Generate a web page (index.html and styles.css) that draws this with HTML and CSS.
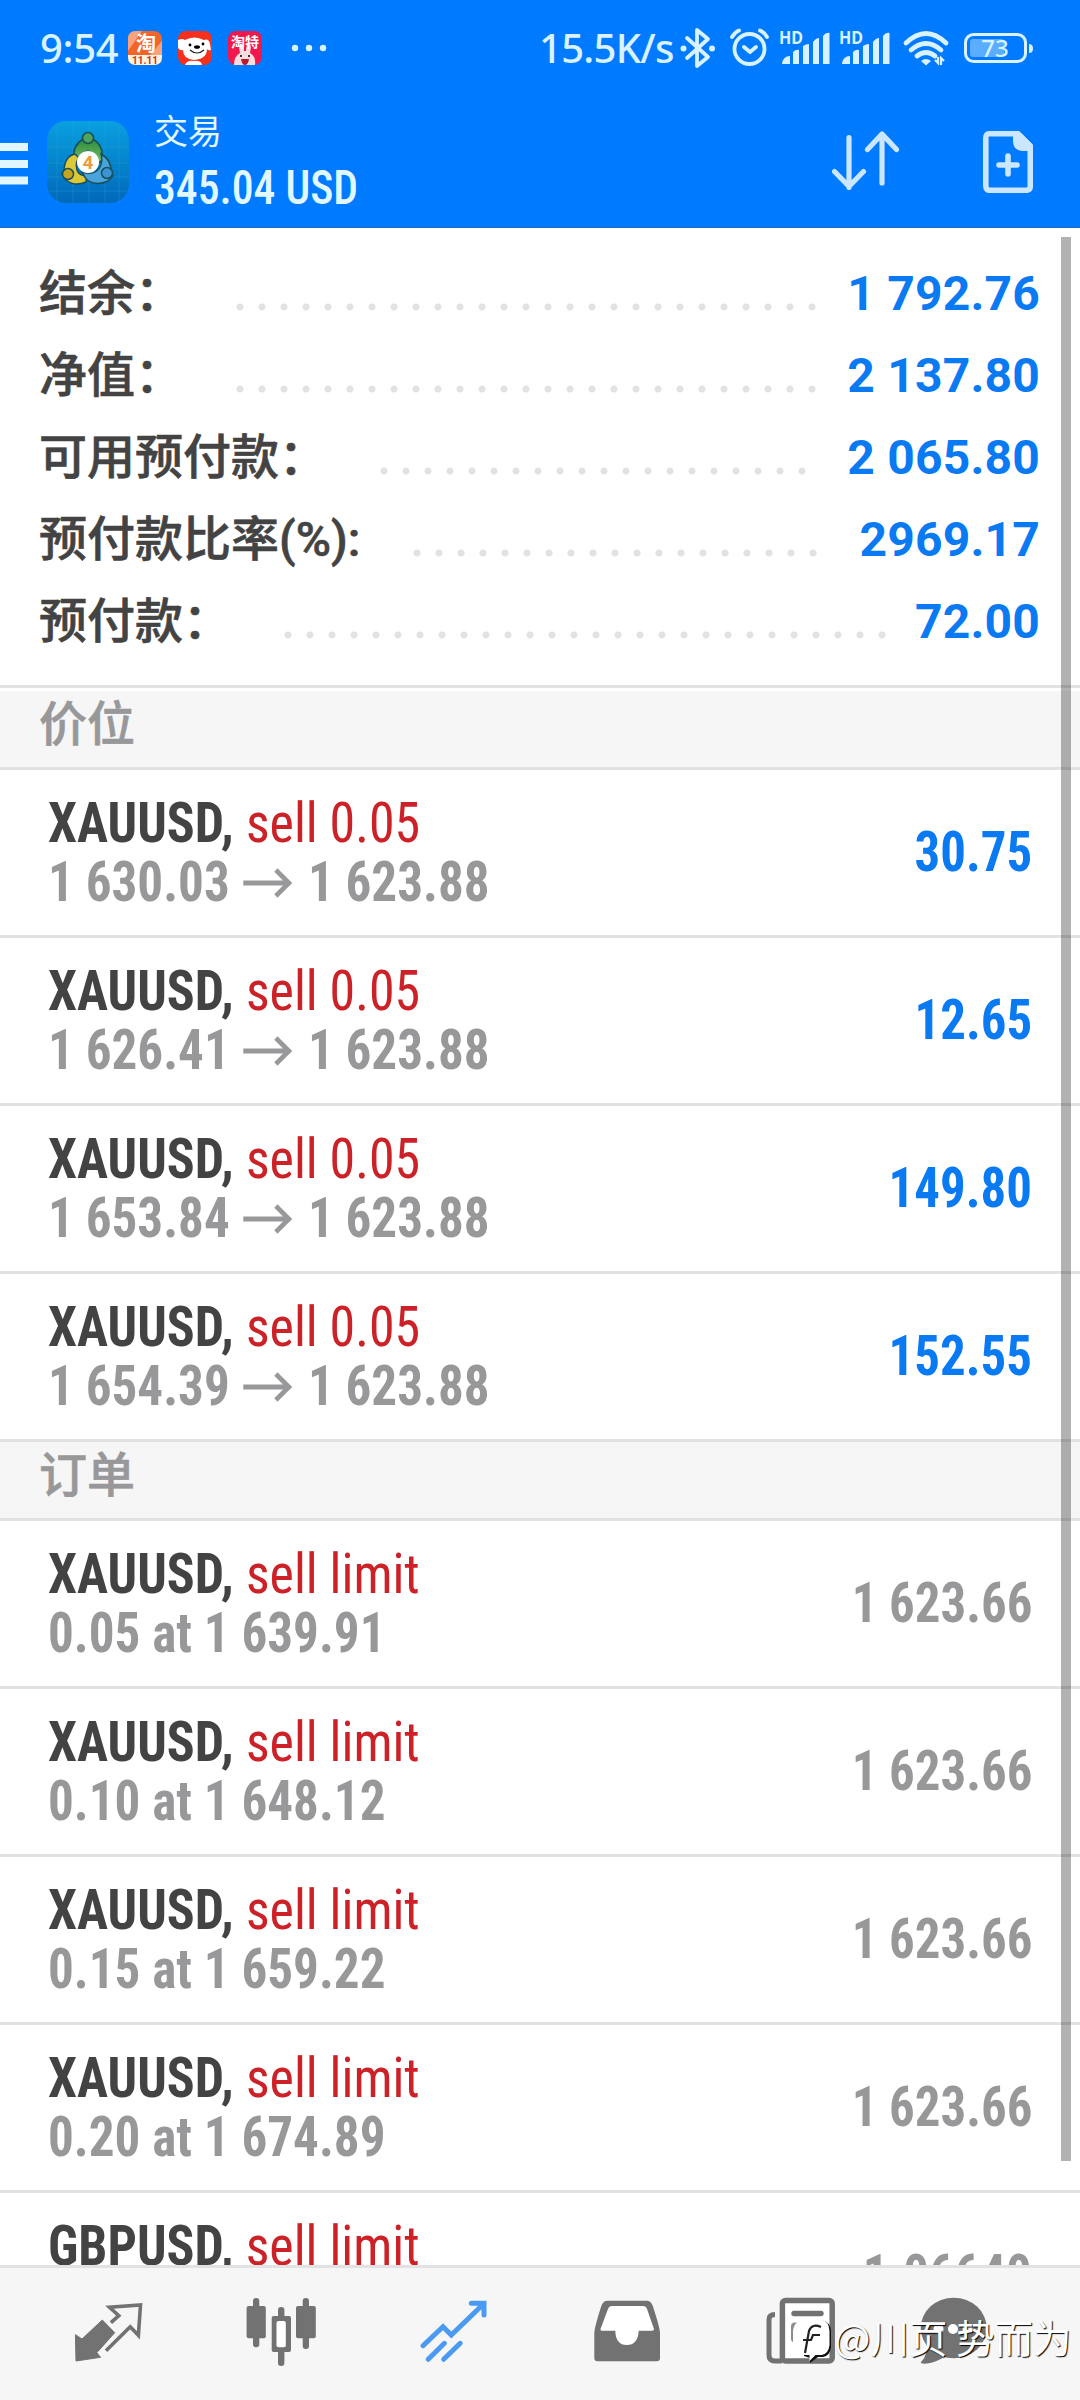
FILE: index.html
```html
<!DOCTYPE html>
<html lang="zh-CN">
<head>
<meta charset="utf-8">
<title>交易</title>
<link rel="stylesheet" href="styles.css">
</head>
<body>
<div class="phone">
  <header class="header">
    <div class="status">
      <span class="clock">9:54</span>
      <div class="notes">
        <svg class="note" viewBox="0 0 34 34">
          <rect width="34" height="34" rx="8" fill="#f0662a"/>
          <path d="M0 8Q0 0 8 0h6L0 20zM34 10L22 24h12z" fill="#f9a37c"/>
          <path d="M0 24h34v2q0 8-8 8H8q-8 0-8-8z" fill="#fff0dc"/>
          <text x="18" y="20" class="note-zh note-big">淘</text>
          <text x="17" y="32.500" class="note-num">11.11</text>
        </svg>
        <svg class="note" viewBox="0 0 34 34">
          <rect width="34" height="34" rx="8" fill="#f6301c"/>
          <path d="M0 9q4-2 7 0Q16 4 26 9q5-2 6 4l1 6q-3 1-4-1 0 10-13 11Q5 28 5 19q-4 1-5-3z" fill="#fff"/>
          <path d="M7 34q2-5 9-4 7-1 8 4z" fill="#fff"/>
          <circle cx="12" cy="14" r="1.400"/><circle cx="25" cy="13" r="1.400"/><ellipse cx="19" cy="16" rx="3" ry="1.800"/>
          <path d="M12 19q7 6 14 0" fill="none" stroke="#222" stroke-width="1.200"/>
        </svg>
        <svg class="note" viewBox="0 0 34 34">
          <rect width="34" height="34" rx="8" fill="#f0184c"/>
          <path d="M6 34q0-9 6-12-2-9 1-9 3 0 3 7h2q0-7 3-7t1 9q6 3 5 12z" fill="#fbdde0"/>
          <text x="17" y="16" class="note-zh note-small">淘特</text>
          <circle cx="13" cy="25" r="1"/><circle cx="21" cy="25" r="1"/>
          <path d="M13 28h8q-1 6-4 6t-4-6z" fill="#b81a2c"/>
        </svg>
      </div>
      <svg class="more" viewBox="0 0 36 8"><g fill="#d8f2ff"><circle cx="4" cy="4" r="3.200"/><circle cx="18" cy="4" r="3.200"/><circle cx="32" cy="4" r="3.200"/></g></svg>
      <div class="tray">
        <span class="speed">15.5K/s</span>
        <svg class="bt" viewBox="0 0 36 40"><path d="M7 10l21 19-11 9V2l11 9L7 30" fill="none" stroke="#d8f2ff" stroke-width="3.800" stroke-linejoin="round" stroke-linecap="round"/><circle cx="3.500" cy="20.500" r="3" fill="#d8f2ff"/><circle cx="32" cy="20.500" r="3" fill="#d8f2ff"/></svg>
        <svg class="alarm" viewBox="0 0 39 40"><g fill="none" stroke="#d8f2ff" stroke-width="3.800" stroke-linecap="round" stroke-linejoin="round"><circle cx="19.500" cy="21" r="15"/><path d="M14 19l6 5 6-5M2 9q3-5 7-6.500M37 9q-3-5-7-6.500"/></g></svg>
        <svg class="hd" viewBox="0 0 50 40"><text x="-1" y="16" class="hd-text" textLength="24" lengthAdjust="spacingAndGlyphs">HD</text><path d="M2 36q1-8 8-8v8zM13 36V24q3-3 6-2v14zM23 36V18q3-2 6-2v20zM33 36V14q3-4 6-4v26zM43 36V8q3-4 6.500-3v31z" fill="#d8f2ff"/></svg>
        <svg class="hd hd-next" viewBox="0 0 50 40"><text x="-1" y="16" class="hd-text" textLength="24" lengthAdjust="spacingAndGlyphs">HD</text><path d="M2 36q1-8 8-8v8zM13 36V24q3-3 6-2v14zM23 36V18q3-2 6-2v20zM33 36V14q3-4 6-4v26zM43 36V8q3-4 6.500-3v31z" fill="#d8f2ff"/></svg>
        <svg class="wifi" viewBox="0 0 46 40"><g fill="none" stroke="#d8f2ff" stroke-width="4.800" stroke-linecap="round"><path d="M3 15Q23-4 43 15M8 22q15-13 30 0M14 28q9-7 18 0"/></g><path d="M18 33q5-4 10 0l-5 4.500z" fill="#d8f2ff"/><path d="M32 32l3 3v-6M41 33l-3-3v7" fill="none" stroke="#d8f2ff" stroke-width="2.200"/></svg>
        <svg class="battery" viewBox="0 0 69 40"><rect x="6" y="11" width="34" height="18" rx="3" fill="#5aadff"/><rect x="1.500" y="6.500" width="60" height="27" rx="8" fill="none" stroke="#d8f2ff" stroke-width="3"/><path d="M65 16q4 0 4 4.500t-4 4.500z" fill="#d8f2ff"/><text x="31" y="29" class="bat-text">73</text></svg>
      </div>
    </div>
    <div class="toolbar">
      <svg class="menu" viewBox="0 0 28 42"><path d="M0 0h28v8H0zM0 17h28v8H0zM0 33.500h28v8H0z" fill="#e2f6ff"/></svg>
      <svg class="logo" viewBox="0 0 82 82">
        <defs>
          <linearGradient id="bg" x2="0" y2="1"><stop stop-color="#0aa0e0"/><stop offset="1" stop-color="#0068b8"/></linearGradient>
          <linearGradient id="green" x2="0" y2="1"><stop stop-color="#2c8a3c"/><stop offset="1" stop-color="#7cc46a"/></linearGradient>
        </defs>
        <rect width="82" height="82" rx="19" fill="url(#bg)"/>
        <path d="M10 0v82M26 0v82M42 0v82M58 0v82M72 0v82M0 26h82M0 42h82M0 56h82M0 70h82" stroke="#2fa6e2" stroke-width=".6" opacity=".5"/>
        <g stroke="#174f5c" stroke-width="1.500">
          <path d="M27 38q-2-13 9-20h10q11 7 9 21l-6 5q1-12-8-14-8 1-8 8z" fill="url(#green)"/>
          <path d="M28 33q-10 2-11 16l-2 4 4 6q9 7 20 2l1-6q-8 0-10-6-2-8 2-12z" fill="#dcc838"/>
          <path d="M54 33q11 6 10 19l2 3-5 5q-12 6-22-2l-4-7q13 4 18-5 3-6 1-13z" fill="#4ba3dc"/>
          <circle cx="41" cy="17" r="5.500" fill="#4fa35c"/>
          <circle cx="21" cy="53" r="5.500" fill="#c9a41e"/>
          <circle cx="60" cy="52" r="5.500" fill="#3b93d4"/>
        </g>
        <circle cx="41" cy="41" r="11" fill="#fff"/>
        <text x="41" y="48" class="logo-four">4</text>
      </svg>
      <div class="title">
        <div class="title-name">交易</div>
        <div class="title-sum"><span class="narrow">345.04 USD</span></div>
      </div>
      <svg class="sort" viewBox="0 0 68 60"><path d="M17 7.500v50M2.500 41.500L17 56.500l14.500-15M50 53V5M35.500 19.500L50 4l14.500 15.500" fill="none" stroke="#cbe6ff" stroke-width="5.200" stroke-linecap="round" stroke-linejoin="round"/></svg>
      <svg class="newdoc" viewBox="0 0 50 62"><path d="M6 2.800h29L47.300 15v40q0 4.300-4.300 4.300H7q-4.200 0-4.200-4.300V7Q2.800 2.800 6 2.800z" fill="none" stroke="#cbe6ff" stroke-width="5.600"/><path d="M30 2h8l11 11v7H39q-9-1-9-10z" fill="#cbe6ff"/><path d="M25 25v18M16 34h18" stroke="#cbe6ff" stroke-width="5.600" stroke-linecap="round"/></svg>
    </div>
  </header>

  <main class="content">
    <section class="summary">
      <div class="sum-row"><span class="sum-label">结余：</span><i class="dots" style="--n:27"></i><b class="sum-value">1 792.76</b></div>
      <div class="sum-row"><span class="sum-label">净值：</span><i class="dots" style="--n:27"></i><b class="sum-value">2 137.80</b></div>
      <div class="sum-row"><span class="sum-label">可用预付款：</span><i class="dots" style="--n:20"></i><b class="sum-value">2 065.80</b></div>
      <div class="sum-row"><span class="sum-label">预付款比率<span class="latin">(%):</span></span><i class="dots" style="--n:19"></i><b class="sum-value">2969.17</b></div>
      <div class="sum-row"><span class="sum-label">预付款：</span><i class="dots" style="--n:28"></i><b class="sum-value">72.00</b></div>
    </section>

    <h2 class="section first">价位</h2>
    <div class="row"><div class="deal"><div class="line"><b class="sym">XAUUSD,</b><span class="side">sell 0.05</span></div><div class="line prices"><span>1 630.03</span><svg class="arrow" viewBox="0 0 54 30"><path d="M0 15h50M35 2l14 13-14 13" /></svg><span>1 623.88</span></div></div><b class="profit">30.75</b></div>
    <div class="row"><div class="deal"><div class="line"><b class="sym">XAUUSD,</b><span class="side">sell 0.05</span></div><div class="line prices"><span>1 626.41</span><svg class="arrow" viewBox="0 0 54 30"><path d="M0 15h50M35 2l14 13-14 13" /></svg><span>1 623.88</span></div></div><b class="profit">12.65</b></div>
    <div class="row"><div class="deal"><div class="line"><b class="sym">XAUUSD,</b><span class="side">sell 0.05</span></div><div class="line prices"><span>1 653.84</span><svg class="arrow" viewBox="0 0 54 30"><path d="M0 15h50M35 2l14 13-14 13" /></svg><span>1 623.88</span></div></div><b class="profit">149.80</b></div>
    <div class="row"><div class="deal"><div class="line"><b class="sym">XAUUSD,</b><span class="side">sell 0.05</span></div><div class="line prices"><span>1 654.39</span><svg class="arrow" viewBox="0 0 54 30"><path d="M0 15h50M35 2l14 13-14 13" /></svg><span>1 623.88</span></div></div><b class="profit">152.55</b></div>

    <h2 class="section">订单</h2>
    <div class="row"><div class="deal"><div class="line"><b class="sym">XAUUSD,</b><span class="side">sell limit</span></div><div class="line order">0.05 at 1 639.91</div></div><b class="profit quote">1 623.66</b></div>
    <div class="row"><div class="deal"><div class="line"><b class="sym">XAUUSD,</b><span class="side">sell limit</span></div><div class="line order">0.10 at 1 648.12</div></div><b class="profit quote">1 623.66</b></div>
    <div class="row"><div class="deal"><div class="line"><b class="sym">XAUUSD,</b><span class="side">sell limit</span></div><div class="line order">0.15 at 1 659.22</div></div><b class="profit quote">1 623.66</b></div>
    <div class="row"><div class="deal"><div class="line"><b class="sym">XAUUSD,</b><span class="side">sell limit</span></div><div class="line order">0.20 at 1 674.89</div></div><b class="profit quote">1 623.66</b></div>
    <div class="row"><div class="deal"><div class="line"><b class="sym">GBPUSD,</b><span class="side">sell limit</span></div></div><b class="profit quote">1.06640</b></div>
    <div class="scrollbar"></div>
  </main>

  <nav class="nav">
    <div class="tab"><svg viewBox="0 0 80 80"><path d="M7.400 42.700L14 47l20.300-19 12.400 12.700-17.900 20 3.800 4.600L8 69z" fill="#727272" stroke="#727272" stroke-linejoin="round"/><path d="M42.900 30.700l7.900-7-9.300-8.400 31-2.300-2.100 30.300-8.200-8.600L38 58.700" fill="none" stroke="#727272" stroke-width="3.600"/></svg></div>
    <div class="tab"><svg viewBox="0 0 80 80"><g fill="#727272"><rect x="5.600" y="14" width="19.200" height="32.300" rx="2"/><rect x="12" y="6" width="6.300" height="49.300" rx="3"/><rect x="37" y="15" width="6.400" height="59" rx="3"/><rect x="30.700" y="24" width="19.300" height="36" rx="2"/><rect x="55" y="14" width="19.800" height="32.300" rx="2"/><rect x="61.700" y="6" width="6.300" height="51" rx="3"/></g><rect x="35.500" y="29" width="9.300" height="26.300" rx="2" fill="#fff"/></svg></div>
    <div class="tab"><svg viewBox="0 0 80 80"><path d="M9 53.700l20-19 8.300 8.300L70 11.500M57.300 11.300H70V23M14.200 67.300l16.200-16M29.700 67.300l16.500-16" fill="none" stroke="#4a9af2" stroke-width="5" stroke-linecap="round"/></svg></div>
    <div class="tab"><svg viewBox="0 0 80 80"><path d="M7.300 66V41q0-5 7-27 2-5.300 6-5.300h39.500q4 0 6 5.300 7.200 22 7.200 27v25q0 3.300-3.300 3.300H10.600q-3.300 0-3.300-3.300z" fill="#727272"/><path d="M25 14h31q3 0 4 3l7 20q0 1.700-2 1.700H51.700Q51 53 39.800 53T28.300 38.700H15q-2 0-1.500-1.700l7.500-20q1-3 4-3z" fill="#fff"/></svg></div>
    <div class="tab"><svg viewBox="0 0 80 80"><rect x="22.400" y="8.500" width="49.800" height="60.400" rx="3" fill="#fff" stroke="#727272" stroke-width="5.500"/><path d="M15 22.500q-6 0-6 5V63q0 6 6 6h7" fill="none" stroke="#727272" stroke-width="5"/><path d="M34 21.500h27" stroke="#727272" stroke-width="5.400" stroke-linecap="round"/><rect x="31" y="30.500" width="32" height="20" rx="4" fill="#8d8d8d"/></svg></div>
    <div class="tab tab-last"><svg viewBox="0 0 80 80"><ellipse cx="40.700" cy="36" rx="33" ry="30.300" fill="#727272"/><path d="M13 50q3 12-5.300 20.500Q8 72 14 71.500q9-1 18-7z" fill="#727272"/><g fill="#fff"><circle cx="25.500" cy="37" r="5"/><circle cx="40" cy="37" r="5"/><circle cx="54.500" cy="37" r="5"/></g></svg></div>
    <div class="mark">
      <svg class="mark-logo" viewBox="0 0 40 46"><path d="M15 3h13q11 1 11 12v15q-1 9-8 10h-5l-8 6v-5l-6-2z" fill="#111"/><path d="M14 2h13q10 1 10.500 12v14q-1 9-8 10h-6l-6 6v-6h-4Q2 37 1 27V14Q2 3 14 2z" fill="#fff"/><path d="M29 10q-9-4-12 4l-4 22M11 23h8l2-5h7" fill="none" stroke="#222" stroke-width="2.200"/></svg>
      <span>@川页 势而为</span>
    </div>
  </nav>
</div>
</body>
</html>
```
FILE: styles.css
```css
* { box-sizing: border-box; }
body { margin: 0; background: #fff; }
svg { display: block; flex: none; }

.phone {
  width: 1080px;
  height: 2400px;
  display: flex;
  flex-direction: column;
  overflow: hidden;
  font-family: Roboto, "Noto Sans CJK SC", sans-serif;
  color: #434343;
}

/* header */
.header {
  flex: none;
  height: 228px;
  background: #007aff;
  border-bottom: 2px solid #1a6fd6;
}
.status {
  height: 96px;
  display: flex;
  align-items: center;
  padding: 0 47px 0 40px;
  color: #d8f2ff;
  font: 500 40px/40px "Noto Sans", sans-serif;
}
.clock { width: 88px; letter-spacing: -.3px; }
.notes { display: flex; gap: 16px; }
.note { width: 34px; height: 34px; }
.note-zh { font-family: "Noto Sans CJK SC", sans-serif; font-weight: 700; fill: #fff; text-anchor: middle; }
.note-big { font-size: 20px; }
.note-small { font-size: 14px; }
.note-num { font: 700 10px Roboto, sans-serif; fill: #c8321e; text-anchor: middle; }
.more { width: 36px; height: 8px; margin-left: 29px; }
.tray { display: flex; align-items: center; margin-left: auto; }
.speed { width: 141px; letter-spacing: -.7px; }
.tray svg { height: 40px; overflow: visible; }
.bt { width: 36px; }
.alarm { width: 39px; margin-left: 14px; }
.hd { width: 50px; margin-left: 11px; }
.hd-next { margin-left: 10px; }
.wifi { width: 46px; margin-left: 13px; }
.battery { width: 69px; margin-left: 15px; }
.hd-text { font: 700 17px "Noto Sans", sans-serif; fill: #d8f2ff; }
.bat-text { font: 500 24px "Noto Sans", sans-serif; fill: #d8f2ff; text-anchor: middle; }

.toolbar { display: flex; align-items: flex-start; padding-right: 47px; }
.menu { width: 28px; height: 42px; margin-top: 47px; }
.logo { width: 82px; height: 82px; margin: 25px 25px 0 19px; }
.logo-four { font: 700 19px Roboto, sans-serif; fill: #f09a3e; text-anchor: middle; }
.title { flex: 1; color: #e2f8ff; }
.title-name { font: 400 34px/50px "Noto Sans CJK SC", sans-serif; margin-top: 9px; }
.title-sum { font: 500 48px/60px Roboto, sans-serif; font-stretch: 75%; margin-top: 3px; }
.narrow { display: inline-block; transform: scaleX(.91); transform-origin: left; }
.sort { width: 68px; height: 60px; margin: 34px 83px 0 0; }
.newdoc { width: 50px; height: 62px; margin-top: 35px; }

/* account summary */
.content { position: relative; flex: 1; min-height: 0; overflow: hidden; }
.summary { height: 457px; padding: 20px 40px 0 39px; }
.sum-row { display: flex; height: 82px; align-items: center; }
.sum-label { font: 500 48px/82px "Noto Sans CJK SC", sans-serif; -webkit-text-stroke: .6px #434343; white-space: nowrap; }
.latin { font-family: Roboto, sans-serif; line-height: 0; }
.dots {
  height: 8px;
  width: calc(var(--n) * 22px);
  margin: 36px 0 0 46px;
  background: radial-gradient(circle, #e2e2e2 3px, transparent 4px) 0 0 / 22px 8px;
}
.sum-value { margin: 9px 0 0 auto; font-size: 48px; font-weight: 700; letter-spacing: .2px; color: #0a7af2; }

/* section titles */
.section {
  margin: 0;
  height: 79px;
  padding-left: 39px;
  background: #f6f6f6;
  border-bottom: 3px solid #e2e2e2;
  color: #98989a;
  font: 500 48px/59px "Noto Sans CJK SC", sans-serif;
  -webkit-text-stroke: .6px #98989a;
}
.section.first { height: 85px; border-top: 3px solid #e2e2e2; box-shadow: inset 0 3px #fff; padding-top: 3px; }

/* positions and orders */
.row {
  height: 168px;
  display: flex;
  justify-content: space-between;
  align-items: center;
  padding: 0 48px;
  border-bottom: 3px solid #e2e2e2;
  font-size: 55px;
  line-height: 59px;
  font-stretch: 75%;
}
.deal { align-self: flex-start; padding-top: 24px; }
.line { display: flex; align-items: center; height: 59px; white-space: nowrap; transform: scaleX(.943); transform-origin: left; }
.sym { margin-right: 13px; }
.side { color: #cc2127; font-weight: 450; }
.prices, .order { font-weight: 700; color: #98989a; transform: scaleX(.93); }
.arrow { width: 56px; height: 30px; margin: 0 14px; }
.arrow path { fill: none; stroke: #98989a; stroke-width: 5; }
.profit { color: #0a7af2; transform: scaleX(.925); transform-origin: right; }
.quote { color: #98989a; }

.scrollbar {
  position: absolute;
  top: 9px;
  right: 9px;
  width: 10px;
  height: 1924px;
  background: rgba(0, 0, 0, .3);
}

/* bottom tabs */
.nav {
  position: relative;
  flex: none;
  height: 135px;
  display: flex;
  padding-left: 21.5px;
  background: #f6f6f6;
  border-top: 3px solid #e2e2e2;
}
.tab { width: 173px; display: flex; justify-content: center; padding-top: 24px; }
.tab-last { width: 133px; }
.tab svg { width: 80px; height: 80px; }
.mark {
  position: absolute;
  left: 792px;
  top: 47px;
  display: flex;
  color: #fff;
  font: 400 38.5px/42px "Noto Sans CJK SC", sans-serif;
  text-shadow: 1px 1px 1px #000;
  white-space: nowrap;
}
.mark-logo { width: 40px; height: 46px; margin: 2px 2px 0 0; }
```
